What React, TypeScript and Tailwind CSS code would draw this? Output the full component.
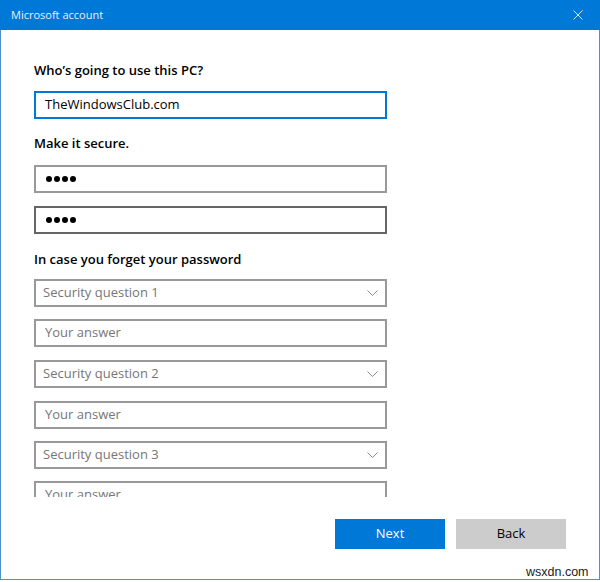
const font = { fontFamily: '"Open Sans", "Noto Sans", sans-serif' };

function Label({ text, className }: { text: string; className: string }) {
  return <div className={`h-[20px] leading-[20px] text-[13px] font-semibold text-black ${className}`}>{text}</div>;
}

function TextBox({ value, placeholder, border, className }: { value?: string; placeholder?: string; border: string; className: string }) {
  return (
    <div className={`w-[353px] h-[28px] border-2 ${border} flex items-center px-[9px] text-[13px] ${className}`}>
      {value ? <span className="text-black">{value}</span> : <span className="text-[#767676]">{placeholder}</span>}
    </div>
  );
}

function Dots({ border, className }: { border: string; className: string }) {
  return (
    <div className={`w-[353px] h-[28px] border-2 ${border} flex items-center gap-[2px] px-[10px] ${className}`}>
      {[0, 1, 2, 3].map((i) => (
        <span key={i} className="w-[6px] h-[6px] rounded-full bg-black" />
      ))}
    </div>
  );
}

function Select({ text, className }: { text: string; className: string }) {
  return (
    <div className={`w-[353px] h-[28px] border-2 border-[#999999] flex items-center justify-between pl-[7px] pr-[7px] text-[13px] ${className}`}>
      <span className="text-[#767676]">{text}</span>
      <svg width="11" height="6" viewBox="0 0 11 6" fill="none" stroke="#8a8a8a" strokeWidth="1">
        <path d="M0.5 0.5 L5.5 5.5 L10.5 0.5" />
      </svg>
    </div>
  );
}

export default function App() {
  return (
    <div className="w-[600px] h-[582px] bg-white relative" style={font}>
      <div className="h-[580px] flex flex-col">
        {/* Title bar */}
        <div className="h-[30px] bg-[#0078d7] flex items-center justify-between pl-[11px] pr-[17px]">
          <span className="text-[11px] text-[#e8f1fb]">Microsoft account</span>
          <svg width="10" height="10" viewBox="0 0 10 10" fill="none" stroke="#d6e8f8" strokeWidth="1">
            <path d="M0.5 0.5 L9.5 9.5 M9.5 0.5 L0.5 9.5" />
          </svg>
        </div>

        <div className="flex-1 flex flex-col border-x border-b border-[#4d8fd1]">
          {/* Scrolling form */}
          <div className="h-[467px] overflow-hidden pl-[33px]">
            <Label text="Who’s going to use this PC?" className="mt-[30px]" />
            <TextBox value="TheWindowsClub.com" border="border-[#0078d7]" className="mt-[11px]" />

            <Label text="Make it secure." className="mt-[14px]" />
            <Dots border="border-[#999999]" className="mt-[12px]" />
            <Dots border="border-[#666666]" className="mt-[13px]" />

            <Label text="In case you forget your password" className="mt-[15px]" />
            <Select text="Security question 1" className="mt-[10px]" />
            <TextBox placeholder="Your answer" border="border-[#999999]" className="mt-[12px]" />
            <Select text="Security question 2" className="mt-[13px]" />
            <TextBox placeholder="Your answer" border="border-[#999999]" className="mt-[13px]" />
            <Select text="Security question 3" className="mt-[12px]" />
            <TextBox placeholder="Your answer" border="border-[#999999]" className="mt-[12px]" />
          </div>

          {/* Buttons */}
          <div className="flex justify-end gap-[11px] pt-[22px] pr-[33px]">
            <button className="w-[110px] h-[30px] bg-[#0078d7] text-white text-[13px]">Next</button>
            <button className="w-[110px] h-[30px] bg-[#cccccc] text-black text-[13px]">Back</button>
          </div>
        </div>
      </div>

      <span className="absolute left-[526px] top-[563px] text-[12.5px] text-[#222222]" style={{ fontFamily: '"Liberation Sans", Arial, sans-serif' }}>
        wsxdn.com
      </span>
    </div>
  );
}
